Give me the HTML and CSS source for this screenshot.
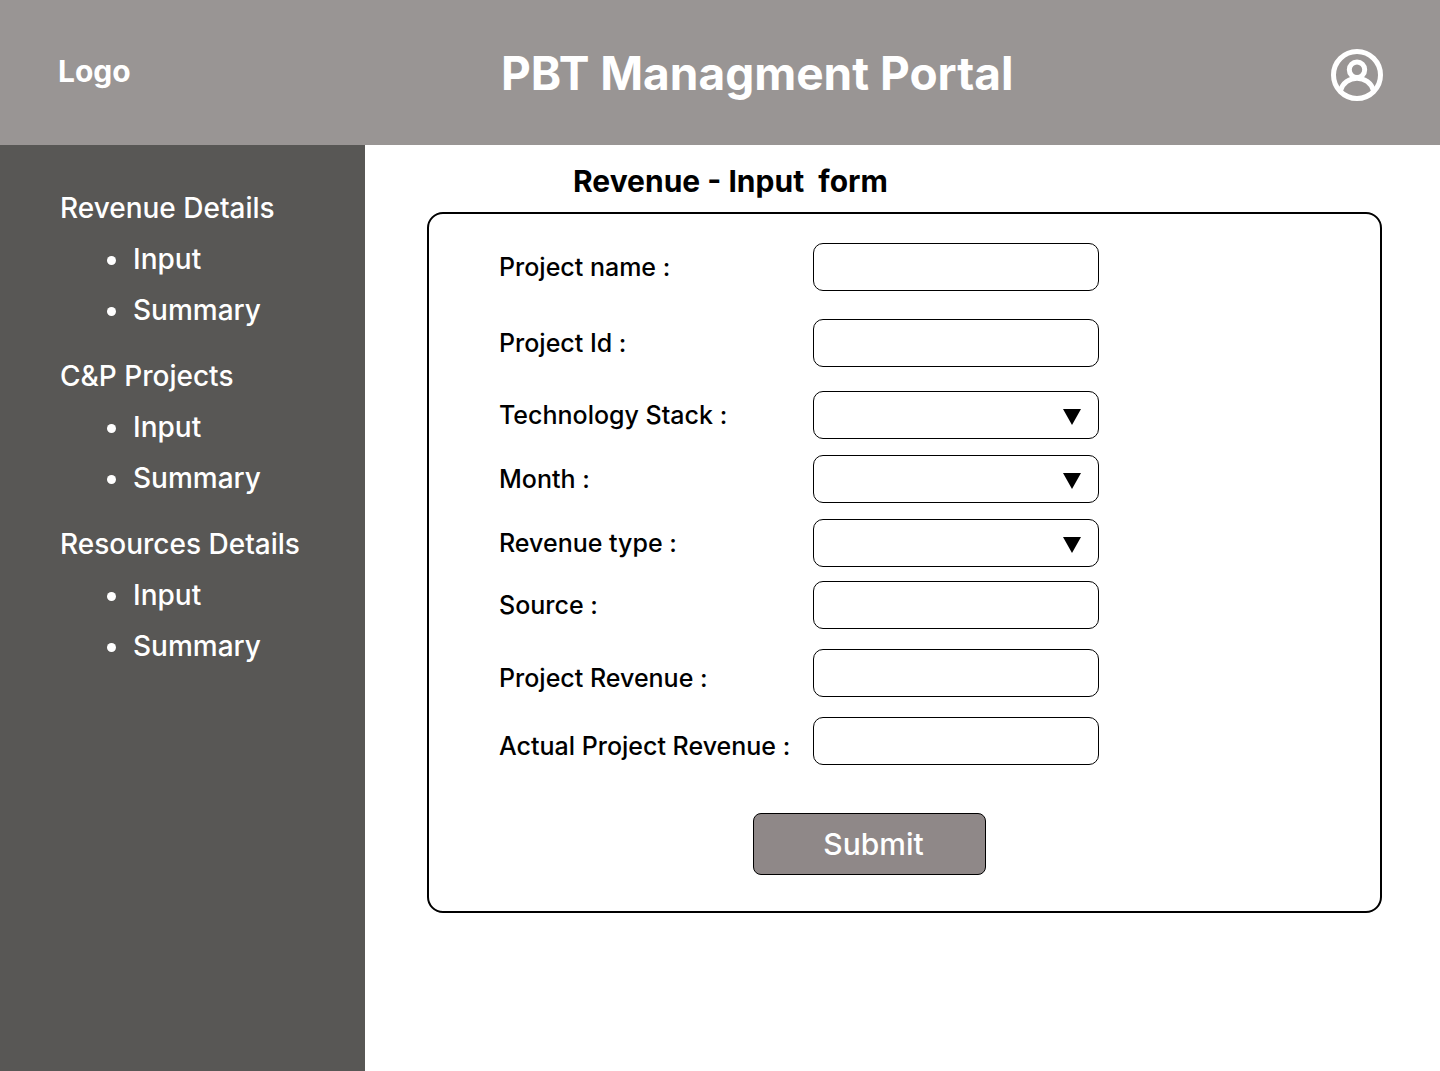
FILE: index.html
```html
<!DOCTYPE html>
<html lang="en">
<head>
<meta charset="utf-8">
<meta name="viewport" content="width=device-width, initial-scale=1">
<title>PBT Managment Portal</title>
<link rel="stylesheet" href="styles.css">
</head>
<body>
<header class="header">
  <a class="logo" href="#">Logo</a>
  <h1 class="title">PBT Managment Portal</h1>
  <a class="account" href="#" aria-label="Account">
    <svg width="52" height="52" viewBox="0 0 52 52" fill="none" stroke="currentColor" stroke-width="5" aria-hidden="true">
      <circle cx="26" cy="26" r="23.5"/>
      <circle cx="26" cy="20.7" r="7.7"/>
      <path d="M9.5 41.5A17.2 17.2 0 0 1 42.5 41.5"/>
    </svg>
  </a>
</header>
<div class="layout">
  <nav class="sidebar">
    <section class="group">
      <h2 class="group-title">Revenue Details</h2>
      <ul class="links">
        <li><a href="#">Input</a></li>
        <li><a href="#">Summary</a></li>
      </ul>
    </section>
    <section class="group">
      <h2 class="group-title">C&amp;P Projects</h2>
      <ul class="links">
        <li><a href="#">Input</a></li>
        <li><a href="#">Summary</a></li>
      </ul>
    </section>
    <section class="group">
      <h2 class="group-title">Resources Details</h2>
      <ul class="links">
        <li><a href="#">Input</a></li>
        <li><a href="#">Summary</a></li>
      </ul>
    </section>
  </nav>
  <main class="main">
    <h2 class="form-title">Revenue - Input  form</h2>
    <form class="card">
      <div class="field space-xl">
        <label for="name">Project name :</label>
        <input class="control" id="name" type="text">
      </div>
      <div class="field space-lg">
        <label for="pid">Project Id :</label>
        <input class="control" id="pid" type="text">
      </div>
      <div class="field space-sm">
        <label for="stack">Technology Stack :</label>
        <select class="control select" id="stack"><option></option></select>
      </div>
      <div class="field space-sm">
        <label for="month">Month :</label>
        <select class="control select" id="month"><option></option></select>
      </div>
      <div class="field space-xs">
        <label for="type">Revenue type :</label>
        <select class="control select" id="type"><option></option></select>
      </div>
      <div class="field space-md">
        <label for="source">Source :</label>
        <input class="control" id="source" type="text">
      </div>
      <div class="field low space-md">
        <label for="revenue">Project Revenue :</label>
        <input class="control" id="revenue" type="text">
      </div>
      <div class="field low">
        <label for="actual">Actual Project Revenue :</label>
        <input class="control" id="actual" type="text">
      </div>
      <button class="submit" type="submit">Submit</button>
    </form>
  </main>
</div>
</body>
</html>
```

FILE: styles.css
```css
* {
  box-sizing: border-box;
}

body {
  margin: 0;
  min-height: 100vh;
  display: flex;
  flex-direction: column;
  font-family: Inter, "Liberation Sans", sans-serif;
  font-weight: 500;
  color: #000;
  background: #fff;
}

h1,
h2,
ul {
  margin: 0;
  padding: 0;
}

a {
  color: inherit;
  text-decoration: none;
}

.header {
  display: grid;
  grid-template-columns: 443px 1fr auto;
  align-items: center;
  min-height: 145px;
  padding: 0 57px 0 58px;
  color: #fff;
  background: #999594;
}

.logo {
  padding-bottom: 3px;
  font-size: 30px;
  font-weight: 700;
}

.title {
  font-size: 46px;
  font-weight: 700;
}

.account {
  padding-top: 5px;
}

.account svg {
  display: block;
}

.layout {
  flex: 1;
  display: flex;
}

.sidebar {
  flex: 0 0 365px;
  display: flex;
  flex-direction: column;
  gap: 15px;
  padding: 38px 20px 38px 60px;
  font-size: 28px;
  line-height: 51px;
  color: #fff;
  background: #585755;
}

.group-title {
  font-size: 28px;
  font-weight: 500;
}

.links {
  list-style: none;
  padding-left: 47px;
}

.links li {
  display: flex;
  align-items: center;
  gap: 17px;
}

.links li::before {
  content: "";
  width: 9px;
  height: 9px;
  margin-top: 2px;
  border-radius: 50%;
  background: currentColor;
}

.main {
  flex: 1;
  padding: 19px 58px 40px 62px;
}

.form-title {
  padding-left: 146px;
  margin-bottom: 13px;
  font-size: 30px;
  line-height: 35px;
  font-weight: 700;
  white-space: pre-wrap;
}

.card {
  padding: 29px 70px 36px;
  border: 2px solid #000;
  border-radius: 16px;
}

.field {
  display: grid;
  grid-template-columns: 314px 286px;
  align-items: center;
  font-size: 25px;
  line-height: 30px;
}

.space-xs {
  margin-bottom: 14px;
}

.space-sm {
  margin-bottom: 16px;
}

.space-md {
  margin-bottom: 20px;
}

.space-lg {
  margin-bottom: 24px;
}

.space-xl {
  margin-bottom: 28px;
}

.low label {
  padding-top: 10px;
}

.control {
  width: 100%;
  height: 48px;
  padding: 0 16px;
  border: 1px solid #000;
  border-radius: 10px;
  font: inherit;
  color: inherit;
  background: #fff;
}

.select {
  appearance: none;
  padding-right: 48px;
  background: #fff url("data:image/svg+xml,%3Csvg xmlns='http://www.w3.org/2000/svg' width='18' height='16'%3E%3Cpath d='M0 0H18L9 16Z'/%3E%3C/svg%3E") no-repeat right 17px top 17px;
}

.submit {
  display: block;
  width: 233px;
  height: 62px;
  margin: 48px 0 0 254px;
  padding: 0 0 0 8px;
  border: 1px solid #000;
  border-radius: 8px;
  font: inherit;
  font-size: 30px;
  color: #fff;
  background: #8f8888;
}
```
